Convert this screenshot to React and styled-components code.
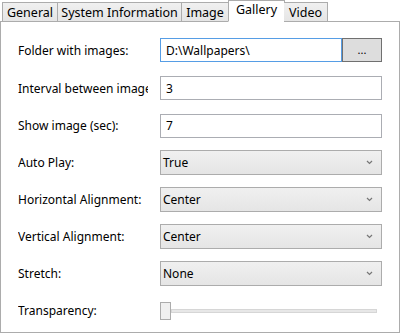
import styled, { createGlobalStyle } from "styled-components";

const Global = createGlobalStyle`
    html, body {
        margin: 0;
        padding: 0;
        background: #ffffff;
    }
    body {
        font-family: "Noto Sans", "Liberation Sans", sans-serif;
        font-size: 12px;
        color: #000;
    }
`;

const Window = styled.div`
    width: 400px;
    height: 335px;
    display: flex;
    flex-direction: column;
    background: #fff;
`;

const TabBar = styled.div`
    display: flex;
    align-items: flex-end;
    height: 22px;
    padding-left: 2px;
    position: relative;
    z-index: 1;
`;

const Tab = styled.div`
    height: ${(p) => (p.active ? "22px" : "20px")};
    width: ${(p) => p.w}px;
    box-sizing: border-box;
    border: 1px solid #acacac;
    border-left: ${(p) => (p.first || p.active ? "1px solid #acacac" : "none")};
    border-bottom: ${(p) => (p.active ? "1px solid #fff" : "1px solid #acacac")};
    background: ${(p) => (p.active ? "#fff" : "linear-gradient(#f0f0f0, #e5e5e5)")};
    margin-left: ${(p) => (p.active ? "-1px" : "0")};
    margin-right: ${(p) => (p.active ? "-1px" : "0")};
    font-size: 12.5px;
    display: flex;
    align-items: center;
    justify-content: center;
    padding-bottom: ${(p) => (p.active ? "3px" : "0")};
    white-space: nowrap;
`;

const Panel = styled.div`
    flex: 1;
    margin-top: -1px;
    margin-bottom: 2px;
    border: 1px solid #acacac;
    padding: 9px 18px 0 17px;
    display: flex;
    flex-direction: column;
`;

const Row = styled.div`
    display: grid;
    grid-template-columns: 142px 222px;
    align-items: center;
    height: ${(p) => p.h || 37}px;
`;

const Label = styled.div`
    overflow: hidden;
    white-space: nowrap;
    width: 130px;
`;

const FieldGroup = styled.div`
    display: flex;
    height: 24px;
`;

const TextBox = styled.div`
    flex: 1;
    height: 24px;
    box-sizing: border-box;
    border: 1px solid ${(p) => (p.focused ? "#569de5" : "#abadb3")};
    background: #fff;
    padding-left: 5px;
    display: flex;
    align-items: center;
`;

const BrowseButton = styled.div`
    width: 40px;
    height: 24px;
    box-sizing: border-box;
    border: 1px solid #707070;
    background: #dddddd;
    display: flex;
    align-items: center;
    justify-content: center;
    font-size: 11px;
    padding-bottom: 2px;
`;

const Combo = styled.div`
    height: 25px;
    box-sizing: border-box;
    border: 1px solid #acacac;
    background: linear-gradient(#f0f0f0, #e5e5e5);
    display: flex;
    align-items: center;
    justify-content: space-between;
    padding: 0 8px 0 2px;
`;

const Chevron = () => (
    <svg width="7" height="5" viewBox="0 0 7 5">
        <path d="M1 1 L3.5 3.5 L6 1" fill="none" stroke="#777" strokeWidth="1.2" />
    </svg>
);

const SliderTrack = styled.div`
    height: 18px;
    display: flex;
    align-items: center;
    width: 217px;
`;

const Thumb = styled.div`
    width: 11px;
    height: 18px;
    box-sizing: border-box;
    border: 1px solid #acacac;
    background: #f0f0f0;
    flex: none;
`;

const Rail = styled.div`
    flex: 1;
    height: 4px;
    box-sizing: border-box;
    border: 1px solid #d6d6d6;
    background: #e7e7e7;
`;

const tabs = [
    { name: "General", w: 56 },
    { name: "System Information", w: 124 },
    { name: "Image", w: 47 },
    { name: "Gallery", w: 57, active: true },
    { name: "Video", w: 44 },
];

export default function App() {
    return (
        <Window>
            <Global />
            <TabBar>
                {tabs.map((t, i) => (
                    <Tab key={t.name} w={t.w} active={t.active} first={i === 0}>
                        {t.name}
                    </Tab>
                ))}
            </TabBar>
            <Panel>
                <Row h={38}>
                    <Label>Folder with images:</Label>
                    <FieldGroup>
                        <TextBox focused>D:\Wallpapers\</TextBox>
                        <BrowseButton>...</BrowseButton>
                    </FieldGroup>
                </Row>
                <Row h={38}>
                    <Label>Interval between images (sec):</Label>
                    <TextBox>3</TextBox>
                </Row>
                <Row>
                    <Label>Show image (sec):</Label>
                    <TextBox>7</TextBox>
                </Row>
                <Row>
                    <Label>Auto Play:</Label>
                    <Combo>True<Chevron /></Combo>
                </Row>
                <Row>
                    <Label>Horizontal Alignment:</Label>
                    <Combo>Center<Chevron /></Combo>
                </Row>
                <Row h={36}>
                    <Label>Vertical Alignment:</Label>
                    <Combo>Center<Chevron /></Combo>
                </Row>
                <Row h={38}>
                    <Label>Stretch:</Label>
                    <Combo>None<Chevron /></Combo>
                </Row>
                <Row>
                    <Label>Transparency:</Label>
                    <SliderTrack>
                        <Thumb />
                        <Rail />
                    </SliderTrack>
                </Row>
            </Panel>
        </Window>
    );
}
